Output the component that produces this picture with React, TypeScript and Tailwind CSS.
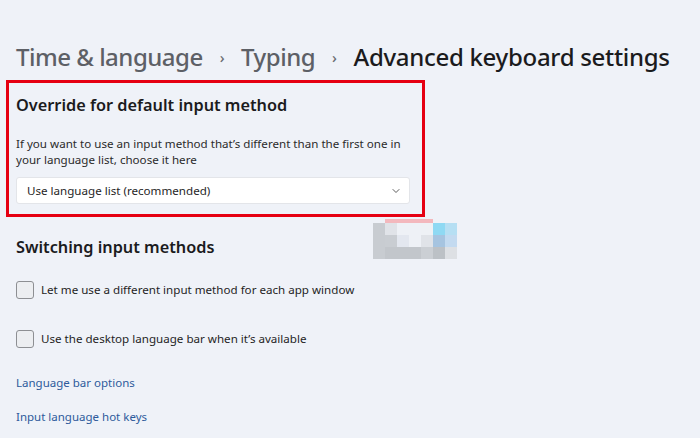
import React from 'react';

const mosaic: string[][] = [
  ['#c8ccd1', '#e0e3e8', '#eef1f6', '#eef1f6', '#eef1f5', '#8fd9f3', '#b6dff3'],
  ['#c8ccd1', '#c9cdd2', '#e3e7ef', '#eef1f6', '#e0e3e8', '#a6c4e0', '#c3daf0'],
  ['#c8ccd1', '#c2c6cb', '#c2c6cb', '#c2c6cb', '#cbcfd4', '#bcc1c6', '#dde0e4'],
];

const Chevron = () => (
  <svg width="10" height="10" viewBox="0 0 10 10" fill="none" className="text-[#5c5c5c]">
    <path d="M2 3.5L5 6.5L8 3.5" stroke="currentColor" strokeWidth="1" strokeLinecap="round" strokeLinejoin="round" />
  </svg>
);

const Checkbox: React.FC<{ label: string }> = ({ label }) => (
  <div className="flex items-center gap-[7px]">
    <div className="w-[18px] h-[18px] rounded-[3px] border border-[#8d8f93] bg-[#eceef1]" />
    <span className="text-[11.6px] leading-[18px] text-[#1f1f1f]">{label}</span>
  </div>
);

export default function App() {
  return (
    <div
      className="relative w-[700px] h-[438px] overflow-hidden bg-[#eff2f8]"
      style={{ fontFamily: '"Noto Sans", "Open Sans", sans-serif' }}
    >
      {/* breadcrumb */}
      <div className="flex items-center whitespace-nowrap pt-[40px] pl-4 text-[24px] leading-[34px] font-medium tracking-[-0.5px]">
        <span className="text-[#5d6066]">Time &amp; language</span>
        <span className="mx-[17px] text-[15px] text-[#6a6d72]">›</span>
        <span className="text-[#5d6066]">Typing</span>
        <span className="mx-[17px] text-[15px] text-[#6a6d72]">›</span>
        <span className="text-[#1b1b1d] tracking-[-0.3px]">Advanced keyboard settings</span>
      </div>

      {/* highlighted section */}
      <div className="mt-[6px] ml-[6px] w-[419px] border-[3px] border-[#e60012] pt-[10px] pb-[10px] pl-[7px]">
        <div className="text-[16.3px] leading-[24px] font-semibold text-[#1b1b1d]">
          Override for default input method
        </div>
        <p className="mt-[19px] text-[11.6px] leading-[16px] text-[#2b2b2b] w-[400px]">
          If you want to use an input method that’s different than the first one in your language list, choose it here
        </p>
        <div className="mt-[9px] w-[394px] h-[27px] flex items-center justify-between bg-white border border-[#e3e5e9] rounded-[3px] pl-[10px] pr-[8px]">
          <span className="text-[11.6px] text-[#1f1f1f]">Use language list (recommended)</span>
          <Chevron />
        </div>
      </div>

      {/* switching */}
      <div className="pl-4">
        <div className="mt-[18px] text-[16.3px] leading-[24px] font-semibold text-[#1b1b1d]">
          Switching input methods
        </div>
        <div className="mt-[22px] flex flex-col gap-[31px]">
          <Checkbox label="Let me use a different input method for each app window" />
          <Checkbox label="Use the desktop language bar when it’s available" />
        </div>
        <div className="mt-[26px] flex flex-col gap-[16px] text-[11.5px] leading-[18px] text-[#2d5a9b]">
          <span>Language bar options</span>
          <span>Input language hot keys</span>
        </div>
      </div>

      {/* censor mosaic */}
      <div className="absolute left-[385px] top-[219px] w-[48px] h-[4px] bg-[#f3b8bd]" />
      <div className="absolute left-[373px] top-[223px] grid grid-cols-7">
        {mosaic.flat().map((c, i) => (
          <div key={i} className="w-[12px] h-[12px]" style={{ backgroundColor: c }} />
        ))}
      </div>
    </div>
  );
}
